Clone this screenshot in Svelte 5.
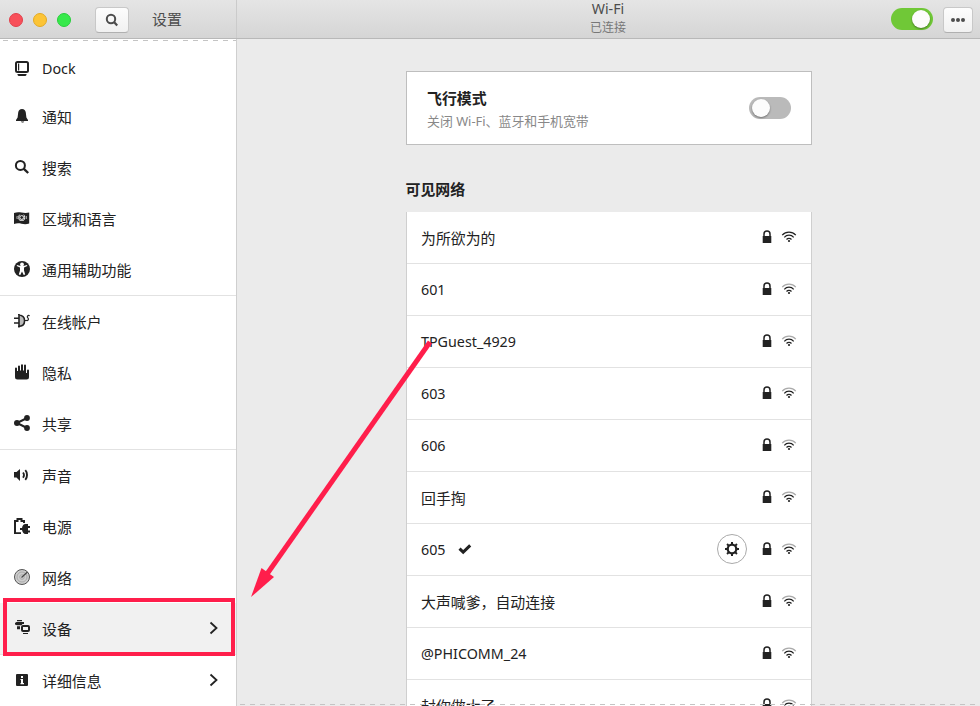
<script>
  const groups = [
    [
      { label: 'Dock', icon: 'dock' },
      { label: '通知', icon: 'bell' },
      { label: '搜索', icon: 'search' },
      { label: '区域和语言', icon: 'flag' },
      { label: '通用辅助功能', icon: 'access' },
    ],
    [
      { label: '在线帐户', icon: 'online' },
      { label: '隐私', icon: 'hand' },
      { label: '共享', icon: 'share' },
    ],
    [
      { label: '声音', icon: 'sound' },
      { label: '电源', icon: 'power' },
      { label: '网络', icon: 'network' },
      { label: '设备', icon: 'devices', more: true, selected: true },
    ],
    [{ label: '详细信息', icon: 'info', more: true }],
  ];
  const networks = [
    { name: '为所欲为的', strong: true },
    { name: '601' },
    { name: 'TPGuest_4929' },
    { name: '603' },
    { name: '606' },
    { name: '回手掏' },
    { name: '605', connected: true },
    { name: '大声喊爹，自动连接' },
    { name: '@PHICOMM_24' },
    { name: '封你做大了' },
  ];
  const latin = (s) => /^[\x00-\x7f]+$/.test(s);
</script>

{#snippet icon(name)}
  <svg class="icon" width="16" height="16" viewBox="0 0 16 16" fill="currentColor">
    {#if name === 'dock'}
      <rect x="2" y="2" width="12" height="10" rx="1.500" fill="none" stroke="currentColor" stroke-width="2" />
      <path d="M4 3.500h1.200v7H4zM3.500 14h9v1l-1 1h-7l-1-1z" />
    {:else if name === 'bell'}
      <path d="M8 1C5.700 1 4.600 2.300 4.200 4.500L3.600 9.400 2 12v1h12v-1l-1.600-2.600-.6-4.900C11.400 2.300 10.300 1 8 1zM6.800 13.400h3.400c-.2.7-.8 1-1.500 1s-1.600-.3-1.900-1z" />
    {:else if name === 'search'}
      <circle cx="6.400" cy="6.400" r="4.500" fill="none" stroke="currentColor" stroke-width="2" />
      <path d="M9.600 9.600l4.600 4.400" fill="none" stroke="currentColor" stroke-width="2.400" />
    {:else if name === 'flag'}
      <path d="M0 3c2.500-1.100 5-1 7.500-.5s5 .6 7.700 0v11c-3 .9-5.200.7-7.700.2s-5-.6-7.500.3z" />
      <g fill="none" stroke="#fff" stroke-width=".9">
        <circle cx="7.700" cy="7.500" r="1.900" />
        <path d="M5.700 4.700c-1.300 1.200-1.400 4.200 0 5.600h4c1.400-1.400 1.300-4.400 0-5.600" />
        <path d="M3.200 6c-.3 1-.3 2 0 3M12.200 6c.3 1 .3 2 0 3" stroke-width=".7" />
      </g>
    {:else if name === 'access'}
      <circle cx="8" cy="8" r="8" />
      <circle cx="8" cy="3.500" r="1.900" fill="#fff" />
      <path d="M2.700 5L6 6.400v3L4.800 13.500l1.500.5L8 10.500 9.700 14l1.500-.5L10 9.400v-3L13.300 5l-.3-1-3.600.9H6.600L3 4z" fill="#fff" />
    {:else if name === 'online'}
      <path d="M5 1.800c5 .2 6 3.700 6 6s-1.200 5.500-6 5.700z" fill="#bbb" />
      <path d="M0 5.300h4.500M0 10h4.500M5 1v13.500M4 2c5 0 6.600 3 6.600 5.800S9 13.500 4 13.500" fill="none" stroke="currentColor" stroke-width="1.600" />
      <path d="M11 7.500h1.300M15.700 2.700c-2.100-.8-3 1-2 2 1.400 1.500.7 3.300-1.400 2.700" fill="none" stroke="currentColor" stroke-width="1.200" />
    {:else if name === 'hand'}
      <path d="M1 4.500q0-1 1-1t1 1V7h1V2.500q0-1 1-1t1 1V6.500h1V1.200q0-1 1-1t1 1V6.500h1V1.500q0-1 1-1t1 1V9h1V6.500q0-1 1-1t1 1V13q0 2.500-2.500 2.500h-9Q1 15.500 1 13z" />
    {:else if name === 'share'}
      <path d="M13 3L3 8l10 5" fill="none" stroke="currentColor" stroke-width="2" />
      <circle cx="3" cy="8" r="3" /><circle cx="13" cy="3" r="2.900" /><circle cx="13" cy="13" r="2.900" />
    {:else if name === 'sound'}
      <path d="M0 5h2.500L6 2v12l-3.500-3.500H0z" />
      <path d="M9 5.500c1.200 1.500 1.200 3.800 0 5.300" fill="none" stroke="currentColor" stroke-width="1.700" />
      <path d="M11.300 3.200c2.300 2.500 2.300 7.200 0 9.700" fill="none" stroke="currentColor" stroke-width="1.900" />
    {:else if name === 'power'}
      <path d="M7 15.200H1V3h2.500V1h4v2H10v2" fill="none" stroke="currentColor" stroke-width="2" />
      <path d="M14 6v10h-2.500C9.500 16 8.500 14 8 12H6v-2h2C8.500 7.500 9.500 6 11.500 6zM14 8h2v2h-2zM14 12.500h2v2h-2z" />
    {:else if name === 'network'}
      <circle cx="8" cy="8" r="7.500" fill="#cdcdcd" stroke="#555" />
      <circle cx="8" cy="8" r="5" fill="none" stroke="#aaa" />
      <circle cx="8" cy="8" r="2.300" fill="none" stroke="#aaa" />
      <path d="M7.500 8.500L13.500 3" stroke="#444" stroke-width="1.200" />
    {:else if name === 'devices'}
      <path d="M3 0h5v1.200H3zM2.500 2H10v2H8.500L7.500 5.200H3L1 4.500V3zM3 6.300h3v2.900H3z" />
      <rect x="8" y="6" width="7" height="5" rx="1" fill="none" stroke="currentColor" stroke-width="2" />
      <path d="M9 13h5v1H9z" />
    {:else if name === 'info'}
      <rect x="2" y="2" width="12" height="12" rx="1" />
      <path d="M7 4h2v2H7zM6.500 7H9v4h1v1.200H6.500V11H7V8h-.5z" fill="#fff" />
    {:else if name === 'lock'}
      <path d="M5 7V5q0-2.900 3-2.900T11 5v2" fill="none" stroke="currentColor" stroke-width="1.500" />
      <path d="M3.700 7h8.600v7H3.700z" />
    {:else if name === 'check'}
      <path d="M2.500 7.600l3.700 3.600 7-6.800" fill="none" stroke="currentColor" stroke-width="3" />
    {:else if name === 'gear'}
      <circle cx="8" cy="8" r="4.300" fill="none" stroke="currentColor" stroke-width="2.300" />
      <path d="M8 1v2.500M8 12.500V15M1 8h2.500M12.500 8H15M3.050 3.050l1.800 1.800M11.150 11.150l1.800 1.800M12.950 3.050l-1.800 1.800M4.850 11.150l-1.800 1.800" stroke="currentColor" stroke-width="2" />
    {/if}
  </svg>
{/snippet}

<div class="window">
  <header>
    <div class="head-left">
      <i class="dot red"></i><i class="dot yellow"></i><i class="dot green"></i>
      <button class="find" aria-label="搜索">
        <svg width="14" height="14" viewBox="0 0 14 14" fill="none" stroke="#4d4d4d">
          <circle cx="6" cy="6" r="4.200" stroke-width="2" /><path d="M9 9l3.200 3.500" stroke-width="2.200" />
        </svg>
      </button>
      <span class="title">设置</span>
    </div>
    <div class="head-mid"><b>Wi-Fi</b><small>已连接</small></div>
    <div class="head-right">
      <span class="switch on"><i></i></span>
      <button class="menu" aria-label="菜单"><i></i><i></i><i></i></button>
    </div>
  </header>
  <div class="body">
    <nav>
      {#each groups as group}
        <ul>
          {#each group as item}
            <li class:selected={item.selected} class:dock={item.icon === 'dock'}>
              {@render icon(item.icon)}
              <span class:latin={latin(item.label)}>{item.label}</span>
              {#if item.more}
                <svg class="chevron" width="10" height="14" viewBox="0 0 10 14" fill="none" stroke="#222" stroke-width="1.800"><path d="M1.500 1.500L7.500 7l-6 5.500" /></svg>
              {/if}
            </li>
          {/each}
        </ul>
      {/each}
    </nav>
    <main>
      <section class="card">
        <div><h3>飞行模式</h3><p>关闭 Wi-Fi、蓝牙和手机宽带</p></div>
        <span class="switch"><i></i></span>
      </section>
      <h2>可见网络</h2>
      <div class="list">
        {#each networks as n}
          <div class="row">
            <span class:latin={latin(n.name)}>{n.name}</span>
            {#if n.connected}<span class="check">{@render icon('check')}</span>{/if}
            <div class="status">
              {#if n.connected}<button class="gear" aria-label="设置">{@render icon('gear')}</button>{/if}
              {@render icon('lock')}
              <svg class="wifi" width="16" height="16" viewBox="0 0 16 16" fill="none" stroke="#222" stroke-width="1.250">
                <path d="M1.200 6.200c3.700-4 9.900-4 13.600 0" stroke={n.strong ? '#222' : '#aaa'} />
                <path d="M3.300 8.400c2.500-3 6.900-3 9.400 0M5.500 10.500c1.400-1.600 3.600-1.600 5 0" />
                <circle cx="8" cy="12" r="1.100" fill="#222" stroke="none" />
              </svg>
            </div>
          </div>
        {/each}
      </div>
    </main>
  </div>
  <div class="dash top"></div>
  <div class="dash bottom"></div>
  <svg class="marks" width="980" height="706" viewBox="0 0 980 706">
    <rect x="5" y="600" width="228" height="54" fill="none" stroke="#ff1e4b" stroke-width="4" />
    <path d="M430 342L267 574" stroke="#ff1e4b" stroke-width="5" />
    <path d="M251 597l10.500-29 12.500 9z" fill="#ff1e4b" />
  </svg>
</div>

<style>
  :global(body) { margin: 0; background: #ebebeb; }
  .window {
    position: relative; width: 980px; height: 706px; overflow: hidden;
    display: flex; flex-direction: column; background: #ebebeb; color: #222;
    font: 14.9px/20px "Noto Sans", "Noto Sans CJK SC", sans-serif;
  }
  header {
    display: flex; height: 38px; flex: none; border-bottom: 1px solid #b8b8b8;
    background: linear-gradient(#e5e5e5, #d5d5d5); color: #4d4d4d;
  }
  .head-left { display: flex; align-items: center; width: 237px; box-sizing: border-box; border-right: 1px solid #cbcbcb; padding-left: 9px; }
  .dot { width: 14px; height: 14px; box-sizing: border-box; border-radius: 50%; margin: 2px 10px 0 0; border: 1px solid; }
  .red { background: #f8505a; border-color: #e2404b; }
  .yellow { background: #fcc436; border-color: #e3aa24; }
  .green { background: #37e94b; border-color: #27cf3b; }
  button { padding: 0; border: 1px solid #c8c8c8; border-bottom-color: #b0b0b0; border-radius: 4px; background: linear-gradient(#fdfdfd, #f1f1f1); display: flex; align-items: center; justify-content: center; box-sizing: border-box; color: #222; }
  .find { width: 34px; height: 26px; margin: 2px 0 0 14px; }
  .title { margin: -1px 0 0 23px; }
  .head-mid { flex: 1; display: flex; flex-direction: column; align-items: center; margin-right: 1px; }
  .head-mid b { font-weight: 400; font-size: 14.2px; line-height: 18px; }
  .head-mid small { font-size: 12px; line-height: 20px; color: #777; }
  .head-right { display: flex; align-items: center; gap: 10px; padding-right: 7px; position: absolute; right: 0; height: 38px; }
  .switch { width: 42px; height: 22px; border-radius: 11px; background: #bababa; display: flex; align-items: center; box-sizing: border-box; padding: 0 3px; }
  .switch i { width: 18px; height: 18px; border-radius: 50%; background: #fcfcfc; box-shadow: 0 1px 2px #0006; }
  .switch.on { background: #70c837; justify-content: flex-end; }
  .menu { width: 30px; height: 26px; gap: 1px; margin-top: 2px; }
  .menu i { width: 4px; height: 4px; border-radius: 50%; background: #4d4d4d; }
  .body { display: flex; flex: 1; min-height: 0; }
  nav { width: 236px; flex: none; background: #fff; border-right: 1px solid #cfcfcf; padding-top: 6px; overflow: hidden; }
  ul { list-style: none; margin: 0; padding: 0; }
  ul + ul { border-top: 1px solid #e2e2e2; }
  li { height: 51px; display: flex; align-items: center; padding: 0 17px 2px 14px; box-sizing: border-box; }
  li.dock { height: 46px; padding-bottom: 0; }
  li span { margin-left: 12px; padding-top: 3px; }
  li.dock span { padding-top: 1px; }
  li.selected { background: #f1f1f1; }
  .icon { flex: none; display: block; }
  .chevron { margin-left: auto; }
  main { flex: 1; display: flex; flex-direction: column; align-items: center; padding-top: 32px; overflow: hidden; }
  .card, h2, .list { width: 406px; flex: none; box-sizing: border-box; margin-left: 1px; }
  .card { height: 74px; background: #fff; border: 1px solid #bebebe; display: flex; align-items: center; justify-content: space-between; padding: 0 20px; }
  h3, h2 { font-size: 14.9px; line-height: 20px; margin: 0; font-weight: 700; }
  h3 { margin-top: 2px; }
  p { margin: 3px 0 0; font-size: 12.9px; line-height: 20px; color: #888; }
  h2 { margin-top: 34px; margin-bottom: 13px; }
  .list { background: #fff; border: solid #cfcfcf; border-width: 0 1px; }
  .row { height: 52px; border-bottom: 1px solid #e2e2e2; box-sizing: border-box; display: flex; align-items: center; padding: 0 14px; }
  .latin { font-size: 14.3px; }
  .check { margin-left: 11px; margin-top: -1px; }
  .status { display: flex; align-items: center; gap: 6px; margin: -2px 0 0 auto; }
  .gear { width: 30px; height: 30px; border-radius: 50%; border-color: #aaa; background: #fff; margin-right: 6px; }
  .dash { position: absolute; height: 1px; background: repeating-linear-gradient(90deg, #c4c4c4 0 5px, transparent 5px 10px); }
  .top { left: 3px; width: 233px; top: 40px; }
  .bottom { left: 240px; right: 0; top: 704px; }
  .marks { position: absolute; left: 0; top: 0; pointer-events: none; }
</style>
